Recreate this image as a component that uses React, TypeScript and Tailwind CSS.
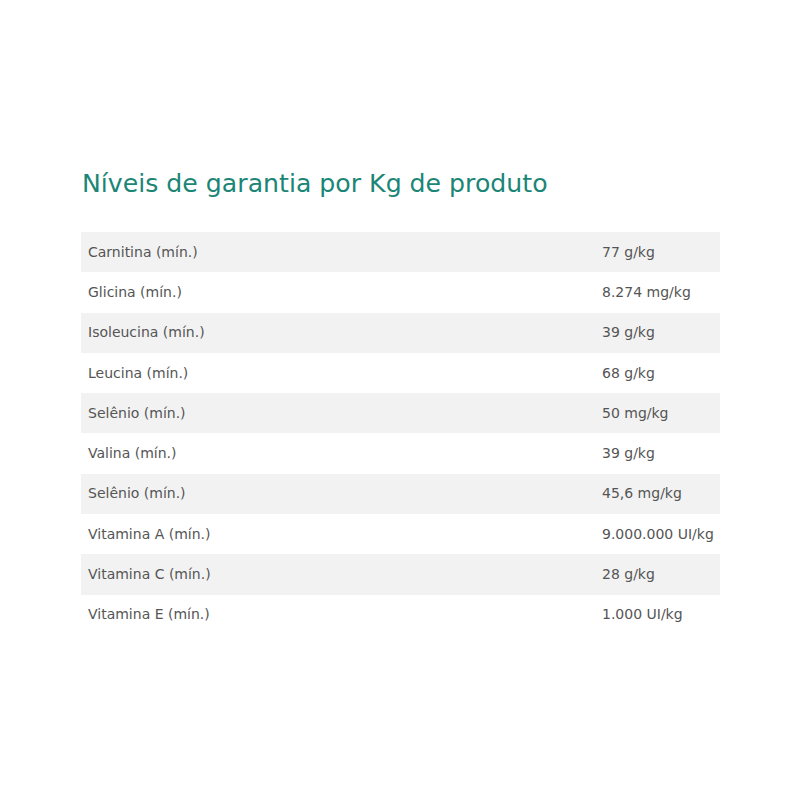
import React from "react";

const rows: [string, string][] = [
  ["Carnitina (mín.)", "77 g/kg"],
  ["Glicina (mín.)", "8.274 mg/kg"],
  ["Isoleucina (mín.)", "39 g/kg"],
  ["Leucina (mín.)", "68 g/kg"],
  ["Selênio (mín.)", "50 mg/kg"],
  ["Valina (mín.)", "39 g/kg"],
  ["Selênio (mín.)", "45,6 mg/kg"],
  ["Vitamina A (mín.)", "9.000.000 UI/kg"],
  ["Vitamina C (mín.)", "28 g/kg"],
  ["Vitamina E (mín.)", "1.000 UI/kg"],
];

export default function App() {
  return (
    <div className="w-[800px] h-[800px] bg-white pt-[166px] pl-[81px] font-['DejaVu_Sans',sans-serif]">
      <h2 className="text-[25.2px] leading-[36px] text-[#1b8576] pl-[1px] mb-[30px]">
        Níveis de garantia por Kg de produto
      </h2>
      <div className="w-[639px] flex flex-col">
        {rows.map(([k, v], i) => (
          <div
            key={i}
            className={`h-[40.3px] flex items-center text-[14px] text-[#555555] ${i % 2 === 0 ? "bg-[#f2f2f2]" : "bg-white"}`}
          >
            <div className="w-[521px] pl-[7px]">{k}</div>
            <div className="flex-1 whitespace-nowrap">{v}</div>
          </div>
        ))}
      </div>
    </div>
  );
}
